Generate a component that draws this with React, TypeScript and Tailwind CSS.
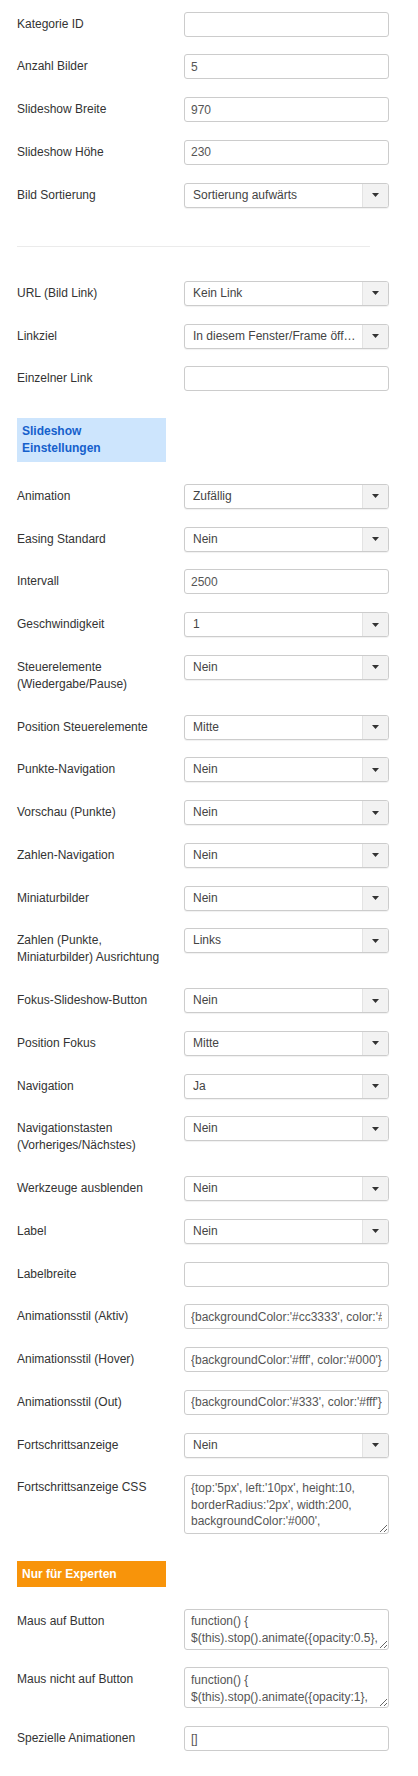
import React from "react";

type Field =
  | { kind: "input"; label: string; value: string }
  | { kind: "select"; label: string; value: string }
  | { kind: "textarea"; label: string; value: string; h: "tall" | "short" };

function Caret() {
  return (
    <svg width="7" height="4" viewBox="0 0 7 4" aria-hidden="true">
      <polygon points="0,0 7,0 3.5,4" fill="#333" />
    </svg>
  );
}

function Control({ f }: { f: Field }) {
  if (f.kind === "input") {
    return (
      <input
        readOnly
        value={f.value}
        className="block w-full h-[25px] border border-[#cccccc] rounded-[3px] px-[6px] text-[12px] text-[#555] bg-white outline-none"
      />
    );
  }
  if (f.kind === "select") {
    return (
      <div className="flex h-[25px] border border-[#cccccc] rounded-[3px] bg-white overflow-hidden shadow-[0_1px_1px_rgba(0,0,0,0.06)]">
        <span className="flex-1 min-w-0 truncate pl-[8px] pr-[1px] leading-[23px] text-[12px] text-[#444]">
          {f.value}
        </span>
        <span className="w-[26px] shrink-0 border-l border-[#e3e3e3] bg-[#f2f2f2] flex items-center justify-center">
          <Caret />
        </span>
      </div>
    );
  }
  return (
    <textarea
      readOnly
      value={f.value}
      className={
        "block w-full border border-[#cccccc] rounded-[3px] px-[6px] pt-[3.5px] pb-[4px] leading-[16.7px] text-[12px] text-[#555] bg-white outline-none overflow-hidden resize-y " +
        (f.h === "tall" ? "h-[59px]" : "h-[41px]")
      }
    />
  );
}

function Row({ f, last }: { f: Field; last?: boolean }) {
  return (
    <div className={"flex items-start " + (last ? "" : "mb-[17.75px]")}>
      <div className="w-[160px] shrink-0 pt-[4px] pb-[4px] leading-[17px] text-[12px] text-[#333]">
        {f.label}
      </div>
      <div className="ml-[7px] w-[205px] shrink-0">
        <Control f={f} />
      </div>
    </div>
  );
}

const group1: Field[] = [
  { kind: "input", label: "Kategorie ID", value: "" },
  { kind: "input", label: "Anzahl Bilder", value: "5" },
  { kind: "input", label: "Slideshow Breite", value: "970" },
  { kind: "input", label: "Slideshow Höhe", value: "230" },
  { kind: "select", label: "Bild Sortierung", value: "Sortierung aufwärts" },
];

const group2: Field[] = [
  { kind: "select", label: "URL (Bild Link)", value: "Kein Link" },
  { kind: "select", label: "Linkziel", value: "In diesem Fenster/Frame öffnen" },
  { kind: "input", label: "Einzelner Link", value: "" },
];

const group3: Field[] = [
  { kind: "select", label: "Animation", value: "Zufällig" },
  { kind: "select", label: "Easing Standard", value: "Nein" },
  { kind: "input", label: "Intervall", value: "2500" },
  { kind: "select", label: "Geschwindigkeit", value: "1" },
  { kind: "select", label: "Steuerelemente (Wiedergabe/Pause)", value: "Nein" },
  { kind: "select", label: "Position Steuerelemente", value: "Mitte" },
  { kind: "select", label: "Punkte-Navigation", value: "Nein" },
  { kind: "select", label: "Vorschau (Punkte)", value: "Nein" },
  { kind: "select", label: "Zahlen-Navigation", value: "Nein" },
  { kind: "select", label: "Miniaturbilder", value: "Nein" },
  { kind: "select", label: "Zahlen (Punkte, Miniaturbilder) Ausrichtung", value: "Links" },
  { kind: "select", label: "Fokus-Slideshow-Button", value: "Nein" },
  { kind: "select", label: "Position Fokus", value: "Mitte" },
  { kind: "select", label: "Navigation", value: "Ja" },
  { kind: "select", label: "Navigationstasten (Vorheriges/Nächstes)", value: "Nein" },
  { kind: "select", label: "Werkzeuge ausblenden", value: "Nein" },
  { kind: "select", label: "Label", value: "Nein" },
  { kind: "input", label: "Labelbreite", value: "" },
  { kind: "input", label: "Animationsstil (Aktiv)", value: "{backgroundColor:'#cc3333', color:'#fff'}" },
  { kind: "input", label: "Animationsstil (Hover)", value: "{backgroundColor:'#fff', color:'#000'}" },
  { kind: "input", label: "Animationsstil (Out)", value: "{backgroundColor:'#333', color:'#fff'}" },
  { kind: "select", label: "Fortschrittsanzeige", value: "Nein" },
  {
    kind: "textarea",
    label: "Fortschrittsanzeige CSS",
    value: "{top:'5px', left:'10px', height:10, borderRadius:'2px', width:200, backgroundColor:'#000', opacity:0.5}",
    h: "tall",
  },
];

const group4: Field[] = [
  {
    kind: "textarea",
    label: "Maus auf Button",
    value: "function() { $(this).stop().animate({opacity:0.5}, 150); }",
    h: "short",
  },
  {
    kind: "textarea",
    label: "Maus nicht auf Button",
    value: "function() { $(this).stop().animate({opacity:1}, 150); }",
    h: "short",
  },
  { kind: "input", label: "Spezielle Animationen", value: "[]" },
];

export default function App() {
  return (
    <div className="flex flex-col bg-white w-[418px] min-h-[1776px] px-[17px] pt-[11.7px] pb-[24px] font-['Liberation_Sans',Arial,sans-serif] text-[12px] text-[#333]">
      {group1.map((f, i) => (
        <Row key={"a" + i} f={f} />
      ))}
      <div className="mt-[20.5px] mb-[34px] h-px w-[353px] bg-[#ebebeb]" />
      {group2.map((f, i) => (
        <Row key={"b" + i} f={f} />
      ))}
      <div className="mt-[8.75px] mb-[22.3px] w-[149px] bg-[#cde5fd] px-[5px] py-[5px] leading-[16.85px] font-bold text-[#1560cc]">
        Slideshow
        <br />
        Einstellungen
      </div>
      {group3.map((f, i) => (
        <Row key={"c" + i} f={f} />
      ))}
      <div className="mt-[9px] mb-[21.7px] w-[149px] bg-[#f8940a] px-[5px] py-[4.5px] leading-[16.7px] font-bold text-white">
        Nur für Experten
      </div>
      {group4.map((f, i) => (
        <Row key={"d" + i} f={f} last={i === group4.length - 1} />
      ))}
    </div>
  );
}
